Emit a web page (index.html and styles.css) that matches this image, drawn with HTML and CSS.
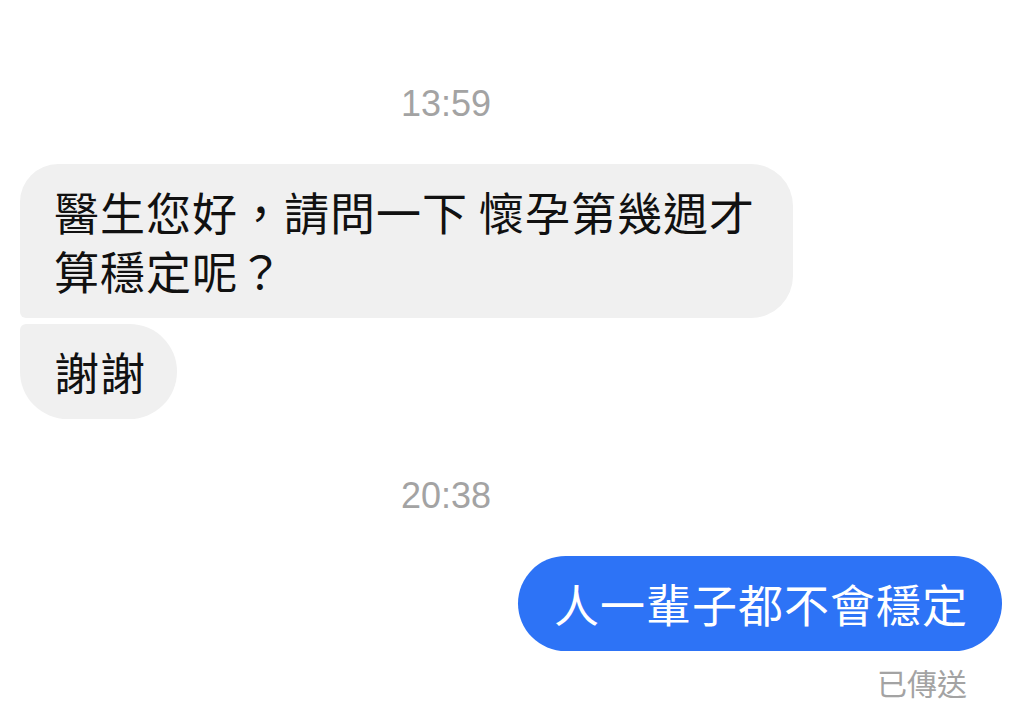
FILE: index.html
```html
<!DOCTYPE html>
<html lang="zh-Hant">
<head>
    <meta charset="UTF-8">
    <meta name="viewport" content="width=device-width, initial-scale=1.0">
    <title>Messages</title>
    <link rel="stylesheet" href="styles.css">
</head>
<body>
    <div class="chat">
        <div class="time first">13:59</div>

        <div class="row incoming">
            <div class="bubble gray top">醫生您好，請問一下 懷孕第幾週才算穩定呢？</div>
        </div>
        <div class="row incoming">
            <div class="bubble gray bottom">謝謝</div>
        </div>

        <div class="time">20:38</div>

        <div class="row outgoing">
            <div class="bubble blue">人一輩子都不會穩定</div>
        </div>
        <div class="status">已傳送</div>
    </div>
</body>
</html>
```

FILE: styles.css
```css
body {
    margin: 0;
    background-color: #ffffff;
    font-family: "Noto Sans CJK TC", "Liberation Sans", sans-serif;
}
.chat {
    padding: 84px 22px 0 20px;
}
.time {
    font-family: "Liberation Sans", Arial, sans-serif;
    font-size: 36px;
    line-height: 40px;
    color: #a3a3a3;
    text-align: center;
    padding-right: 130px;
    margin: 57px 0 40px;
}
.time.first {
    margin-top: 0;
}
.row {
    display: flex;
}
.row + .row {
    margin-top: 6px;
}
.outgoing {
    justify-content: flex-end;
}
.bubble {
    box-sizing: border-box;
    max-width: 773px;
    padding: 18px 34px;
    font-size: 45px;
    line-height: 59px;
    letter-spacing: 1px;
    border-radius: 48px;
}
.gray {
    background-color: #f0f0f0;
    color: #111111;
}
.gray.top {
    border-radius: 38px 42px 42px 6px;
}
.gray.bottom {
    padding-right: 31px;
    border-radius: 6px 48px 48px 48px;
}
.blue {
    background-color: #2d73f6;
    color: #ffffff;
    padding: 18px 34px 18px 36px;
}
.status {
    text-align: right;
    margin: 13px 35px 0 0;
    font-size: 30px;
    line-height: 36px;
    color: #a3a3a3;
}
```
